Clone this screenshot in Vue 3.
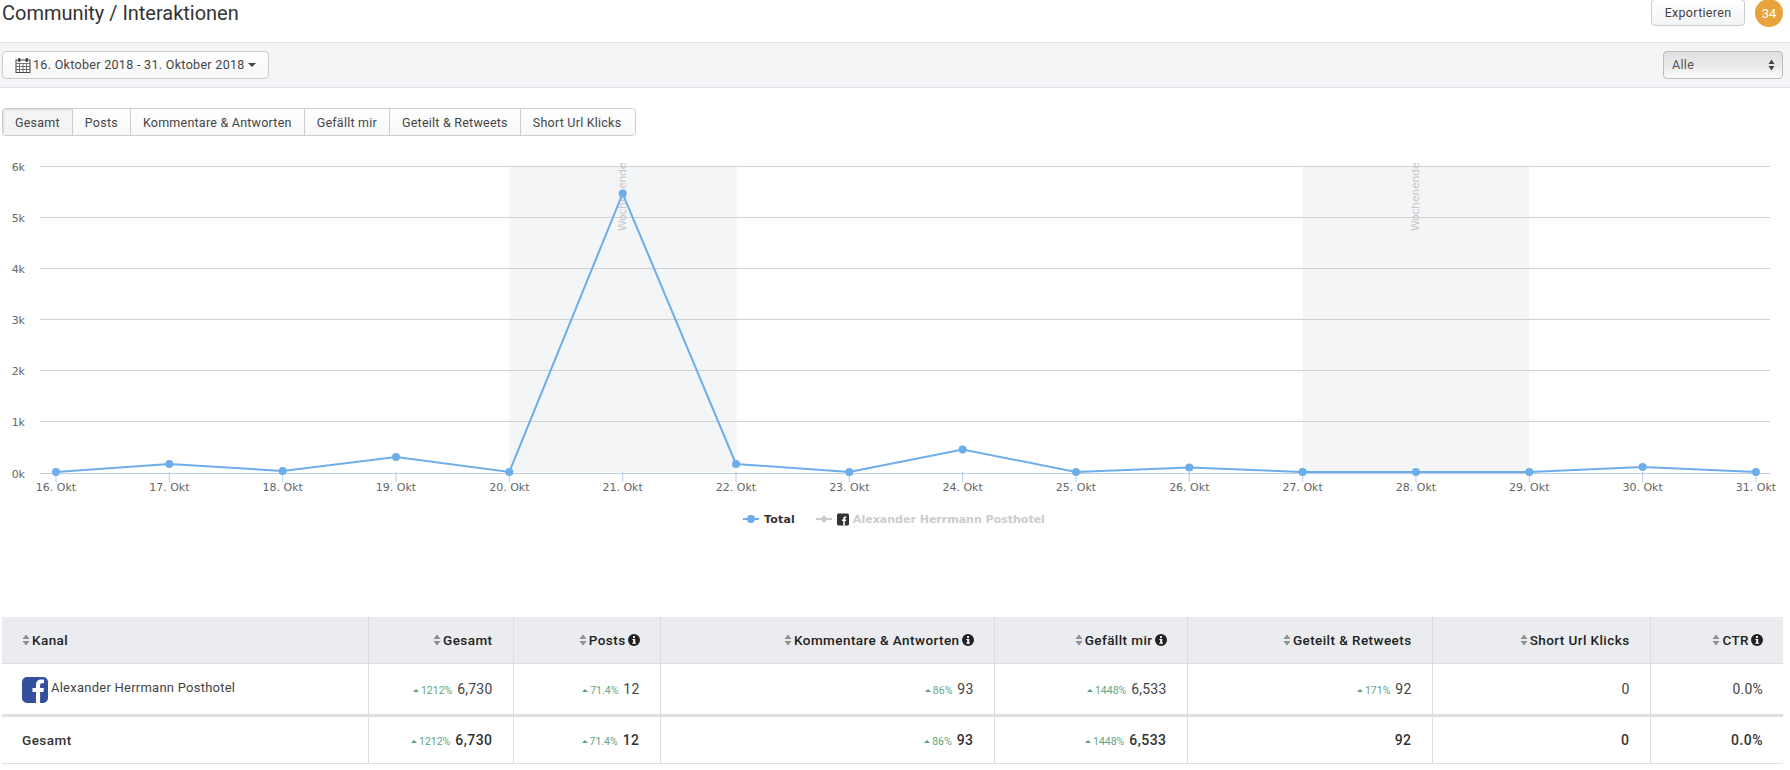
<script setup>
const xAt = (i) => 56 + i * 113.33
const ys = [472, 464, 471, 457, 472, 193.5, 464, 472, 449.5, 472, 467.5, 472, 472, 472, 467, 472]
const days = [16, 17, 18, 19, 20, 21, 22, 23, 24, 25, 26, 27, 28, 29, 30, 31]
const points = ys.map((y, i) => ({ x: xAt(i), y, label: days[i] + '. Okt' }))
const line = points.map((p) => p.x + ',' + p.y).join(' ')
const grid = [0, 1, 2, 3, 4, 5, 6].map((k) => ({ label: k + 'k', y: Math.round(472.5 - k * 51.1) + 0.5 }))
const tabs = ['Gesamt', 'Posts', 'Kommentare & Antworten', 'Gefällt mir', 'Geteilt & Retweets', 'Short Url Klicks']
const columns = [
  { name: 'Kanal', width: 366, left: true },
  { name: 'Gesamt', width: 145 },
  { name: 'Posts', width: 147, info: true },
  { name: 'Kommentare & Antworten', width: 334, info: true },
  { name: 'Gefällt mir', width: 193, info: true },
  { name: 'Geteilt & Retweets', width: 245 },
  { name: 'Short Url Klicks', width: 218 },
  { name: 'CTR', width: 133, info: true }
]
const cells = [
  { p: '1212%', v: '6,730' },
  { p: '71.4%', v: '12' },
  { p: '86%', v: '93' },
  { p: '1448%', v: '6,533' },
  { p: '171%', v: '92' },
  { v: '0' },
  { v: '0.0%' }
]
const totals = cells.map((c, i) => (i === 4 ? { v: c.v } : c))
</script>

<template>
  <div class="page">
    <header class="top">
      <h1 class="title">Community / Interaktionen</h1>
      <div class="top-actions">
        <button class="export">Exportieren</button>
        <span class="badge">34</span>
      </div>
    </header>

    <div class="toolbar">
      <button class="date">
        <svg class="cal" width="16" height="16" viewBox="0 0 16 16">
          <rect x="1" y="3" width="14" height="12.5" fill="#fff" stroke="#444" stroke-width="1" />
          <path d="M1 6.5h14M1 9.5h14M1 12.5h14M4.5 6.5v9M8 6.5v9M11.500 6.500v9" stroke="#555" stroke-width=".8" fill="none" />
          <rect x="3" y="1" width="2.500" height="4" rx="1" fill="#444" />
          <rect x="10.500" y="1" width="2.500" height="4" rx="1" fill="#444" />
        </svg>
        <span>16. Oktober 2018 - 31. Oktober 2018</span>
        <i class="caret"></i>
      </button>
      <div class="select">
        <span>Alle</span>
        <svg width="7" height="12" viewBox="0 0 7 12"><path d="M3.500 0.500L6.500 5H.5zM3.500 11.500L.5 7h6z" fill="#444" /></svg>
      </div>
    </div>

    <div class="tabs">
      <button v-for="(t, i) in tabs" :key="t" class="tab" :class="{ active: i === 0 }">{{ t }}</button>
    </div>

    <svg class="chart" width="1790" height="481" viewBox="0 136 1790 481">
      <rect x="509.500" y="166" width="227" height="306" fill="#f4f5f7" />
      <rect x="1302.500" y="166" width="226.500" height="306" fill="#f4f5f7" />
      <text class="band" transform="translate(626 231) rotate(-90)">Wochenende</text>
      <text class="band" transform="translate(1419 231) rotate(-90)">Wochenende</text>
      <g v-for="g in grid" :key="g.label">
        <line x1="40" x2="1770" :y1="g.y" :y2="g.y" :stroke="g.label === '0k' ? '#b9cde5' : '#d0d0d0'" />
        <text class="ylab" x="25" :y="g.y + 4" text-anchor="end">{{ g.label }}</text>
      </g>
      <g v-for="p in points" :key="p.label">
        <line :x1="p.x" :x2="p.x" y1="472" y2="482" stroke="#b9cde5" />
        <text class="xlab" :x="p.x" y="491" text-anchor="middle">{{ p.label }}</text>
      </g>
      <polyline :points="line" fill="none" stroke="#6daeea" stroke-width="2" />
      <circle v-for="p in points" :key="p.x" :cx="p.x" :cy="p.y" r="4" fill="#6daeea" />

      <line x1="743" x2="759" y1="519" y2="519" stroke="#6daeea" stroke-width="2" />
      <circle cx="751" cy="519" r="4" fill="#6daeea" />
      <text class="leg on" x="764" y="523">Total</text>
      <line x1="816" x2="832" y1="519" y2="519" stroke="#ccc" stroke-width="2" />
      <path d="M824 515l4 4-4 4-4-4z" fill="#ccc" />
      <rect x="837" y="513.500" width="12" height="12" rx="1.500" fill="#333" />
      <path d="M843.300 525.500v-4.500h-1.300v-1.600h1.300v-1.100c0-1.300.8-1.900 1.900-1.900h1.100v1.500h-.7c-.5 0-.7.2-.7.700v.8h1.400l-.2 1.600h-1.200v4.500z" fill="#fff" />
      <text class="leg off" x="853" y="523">Alexander Herrmann Posthotel</text>
    </svg>

    <table class="grid">
      <colgroup>
        <col v-for="c in columns" :key="c.name" :style="{ width: c.width + 'px' }" />
      </colgroup>
      <thead>
        <tr>
          <th v-for="c in columns" :key="c.name" :class="{ left: c.left }">
            <svg class="sort" width="8" height="12" viewBox="0 0 8 12"><path d="M4 .5L7.500 5H.5zM4 11.500L.5 7h7z" fill="#8b8d91" /></svg>
            <span>{{ c.name }}</span>
            <svg v-if="c.info" class="info" width="12" height="12" viewBox="0 0 12 12">
              <circle cx="6" cy="6" r="6" fill="#222" />
              <rect x="5" y="2" width="2" height="2" rx=".5" fill="#fff" />
              <path d="M4.400 5h2.800v3.800h.8v1H4.200v-1h1V6h-.8z" fill="#fff" />
            </svg>
          </th>
        </tr>
      </thead>
      <tbody>
        <tr class="row">
          <td class="left">
            <div class="channel">
              <svg width="26" height="26" viewBox="0 0 26 26">
                <rect width="26" height="26" rx="5" fill="#34509b" />
                <path d="M14 26V15h-3.500v-4H14V8c0-3.500 2-5.400 5.200-5.400 1.400 0 2.500.1 2.800.2v3.500h-2c-1.600 0-1.900.8-1.900 1.900V11h3.800l-.5 4h-3.300v11z" fill="#fff" />
              </svg>
              <span class="channel-name">Alexander Herrmann Posthotel</span>
            </div>
          </td>
          <td v-for="(c, i) in cells" :key="i">
            <span v-if="c.p" class="pct"><i class="up"></i>{{ c.p }}</span>
            <span class="val">{{ c.v }}</span>
          </td>
        </tr>
        <tr class="total">
          <td class="left">Gesamt</td>
          <td v-for="(c, i) in totals" :key="i">
            <span v-if="c.p" class="pct"><i class="up"></i>{{ c.p }}</span>
            <span class="val">{{ c.v }}</span>
          </td>
        </tr>
      </tbody>
    </table>
  </div>
</template>

<style>
body { background: #fff; }
</style>

<style scoped>
.page {
  width: 1790px;
  height: 770px;
  overflow: hidden;
  font-family: Roboto, "Liberation Sans", sans-serif;
  color: #333;
}
.top {
  height: 42px;
  display: flex;
  justify-content: space-between;
  padding: 0 7px 0 2px;
}
.title {
  margin: 0;
  font-size: 20px;
  font-weight: 400;
  line-height: 27px;
  color: #333;
  letter-spacing: -.02px;
}
.top-actions { display: flex; gap: 10px; align-items: flex-start; }
.export {
  width: 94px;
  height: 27px;
  margin-top: -1px;
  border: 1px solid #ccc;
  border-radius: 4px;
  background: linear-gradient(#fff, #f3f4f5);
  font: 12.500px Roboto, sans-serif;
  letter-spacing: .3px;
  color: #444;
  padding: 0;
}
.badge {
  width: 28px;
  height: 28px;
  margin-top: -1px;
  border-radius: 50%;
  background: #e8a33a;
  color: #fff;
  font-size: 13px;
  display: flex;
  align-items: center;
  justify-content: center;
}
.toolbar {
  height: 46px;
  box-sizing: border-box;
  display: flex;
  justify-content: space-between;
  align-items: center;
  padding: 0 7px 0 2px;
  background: #f4f5f7;
  border-top: 1px solid #e0e2e5;
  border-bottom: 1px solid #e0e2e5;
}
.date {
  width: 267px;
  height: 28px;
  display: flex;
  align-items: center;
  gap: 2px;
  padding: 0 0 1px 12px;
  border: 1px solid #ccc;
  border-radius: 4px;
  background: linear-gradient(#fff, #f6f7f8);
  font: 12.500px Roboto, sans-serif;
  letter-spacing: .31px;
  color: #444;
}
.caret {
  width: 0;
  height: 0;
  margin-left: 1px;
  border: 4px solid transparent;
  border-top-color: #444;
  border-bottom-width: 0;
}
.select {
  width: 120px;
  height: 28px;
  box-sizing: border-box;
  display: flex;
  align-items: center;
  justify-content: space-between;
  padding: 0 7px 1px 8px;
  border: 1px solid #bdbdbd;
  border-radius: 4px;
  background: linear-gradient(#e0e0e0, #e9e9e9 55%, #fdfdfd);
  font-size: 12.500px;
  letter-spacing: .3px;
  color: #555;
}
.tabs {
  display: flex;
  width: fit-content;
  height: 28px;
  margin: 20px 0 0 2px;
  border: 1px solid #ccc;
  border-radius: 4px;
  box-sizing: border-box;
  overflow: hidden;
}
.tab {
  padding: 0 12px;
  border: 0;
  border-right: 1px solid #ccc;
  background: linear-gradient(#fff, #f6f7f8);
  font: 12.500px Roboto, sans-serif;
  letter-spacing: .23px;
  color: #444;
  white-space: nowrap;
}
.tab:last-child { border-right: 0; padding-right: 14px; }
.tab.active {
  background: #f3f4f5;
  box-shadow: inset 1px 1px 2px rgba(0, 0, 0, .1);
}
.chart { display: block; }
.band {
  font: 11px "DejaVu Sans", sans-serif;
  fill: #c8c8c8;
  letter-spacing: -.3px;
}
.ylab, .xlab {
  font: 11px "DejaVu Sans", sans-serif;
  fill: #666;
}
.leg {
  font: bold 11px "DejaVu Sans", sans-serif;
  letter-spacing: 0;
}
.leg.on { fill: #333; letter-spacing: .2px; }
.leg.off { fill: #ccc; }
.grid {
  table-layout: fixed;
  width: 1781px;
  margin-left: 2px;
  border-collapse: collapse;
  font-size: 14px;
}
th, td {
  padding: 0 20px 0 8px;
  text-align: right;
  border-left: 1px solid #dcdde0;
  white-space: nowrap;
}
th:first-child, td:first-child { border-left: 0; }
th {
  height: 46px;
  box-sizing: border-box;
  background: #ebecf0;
  border-bottom: 1px solid #dcdde0;
  font-size: 13.500px;
  font-weight: 500;
  letter-spacing: .42px;
  color: #222;
}
th.left, td.left {
  text-align: left;
  padding-left: 20px;
}
.sort { margin-right: 2px; vertical-align: -1px; }
.info { margin-left: 2px; vertical-align: -1.500px; }
.row td { height: 52px; box-sizing: border-box; border-bottom: 3px solid #e0e0e0; color: #444; }
.channel { display: flex; align-items: center; gap: 3px; font-size: 13px; letter-spacing: .24px; color: #444; margin-top: 2px; }
.channel-name { margin-top: -4px; }
.total td {
  height: 48px;
  box-sizing: border-box;
  border-bottom: 1px solid #e0e0e0;
  font-weight: 500;
  color: #333;
}
.total .left { font-size: 13.500px; letter-spacing: .45px; }
.total .val { letter-spacing: .45px; }
.pct {
  font-size: 10.500px;
  font-weight: 400;
  color: #62a583;
  margin-right: 5px;
}
.up {
  display: inline-block;
  width: 0;
  height: 0;
  margin-right: 2px;
  vertical-align: 2px;
  border: 3px solid transparent;
  border-bottom: 3px solid #5d9c7c;
  border-top-width: 0;
}
.val { letter-spacing: .2px; }
</style>
